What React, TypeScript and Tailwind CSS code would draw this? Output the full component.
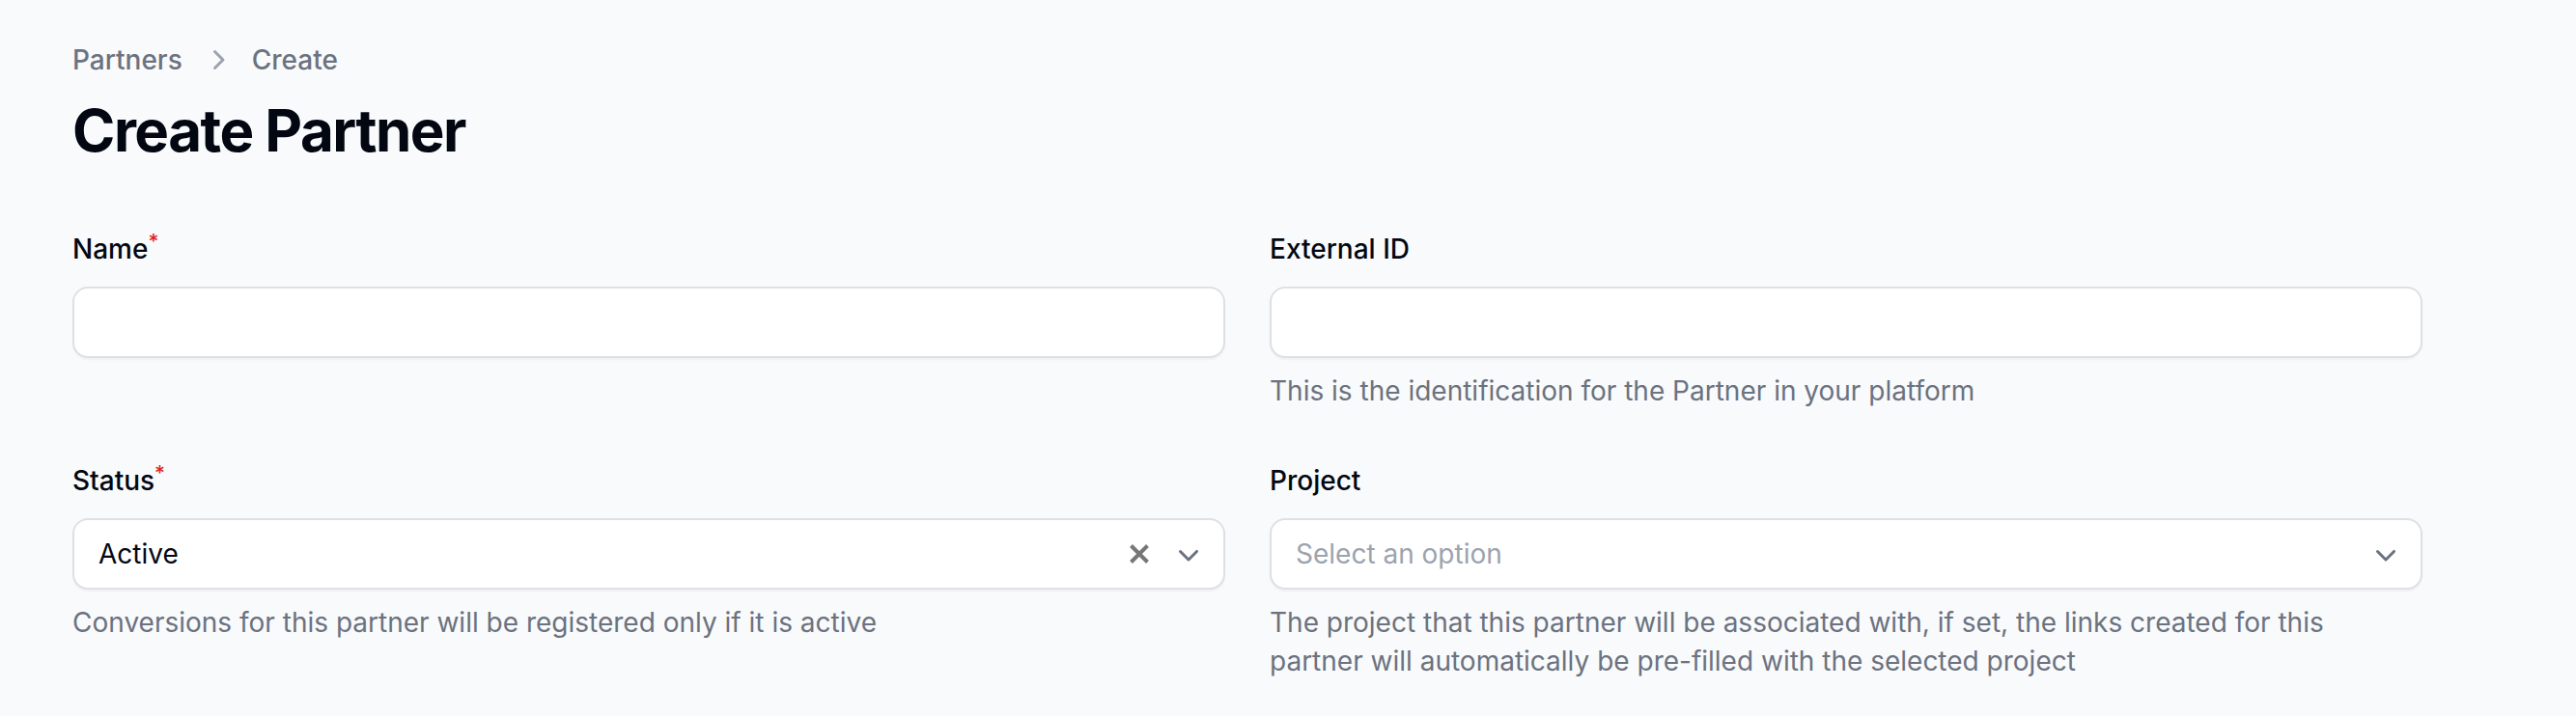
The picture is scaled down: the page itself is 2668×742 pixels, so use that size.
import React from "react"

function Chevron({ dir = "down", className = "" }: { dir?: "down" | "right"; className?: string }) {
  const d =
    dir === "down"
      ? "M5.22 8.22a.75.75 0 0 1 1.06 0L10 11.94l3.72-3.72a.75.75 0 1 1 1.06 1.06l-4.25 4.25a.75.75 0 0 1-1.06 0L5.22 9.28a.75.75 0 0 1 0-1.06Z"
      : "M8.22 5.22a.75.75 0 0 1 1.06 0l4.25 4.25a.75.75 0 0 1 0 1.06l-4.25 4.25a.75.75 0 0 1-1.06-1.06L11.94 10 8.22 6.28a.75.75 0 0 1 0-1.06Z"
  return (
    <svg viewBox="0 0 20 20" fill="currentColor" className={className}>
      <path fillRule="evenodd" clipRule="evenodd" d={d} />
    </svg>
  )
}

function Label({ text, required }: { text: string; required?: boolean }) {
  return (
    <label className="block text-[28px] leading-[48px] font-medium text-[#030712]">
      {text}
      {required && <sup className="text-[#dc2626] font-medium">*</sup>}
    </label>
  )
}

function Hint({ children }: { children: React.ReactNode }) {
  return <p className="mt-[14px] text-[28px] leading-[40px] text-[#6b7280]">{children}</p>
}

function TextInput() {
  return (
    <div className="mt-[15px] h-[74px] rounded-[16px] border-2 border-[#dfe0e3] bg-white shadow-[0_2px_2px_rgba(0,0,0,0.04)]" />
  )
}

function Select({ value, placeholder, clearable }: { value?: string; placeholder?: string; clearable?: boolean }) {
  return (
    <div className="mt-[15px] h-[74px] rounded-[16px] border-2 border-[#dfe0e3] bg-white shadow-[0_2px_2px_rgba(0,0,0,0.04)] flex items-center pl-[25px] pr-[16px]">
      <span className={`flex-1 text-[28px] leading-[48px] ${value ? "text-[#030712]" : "text-[#9ca3af]"}`}>
        {value ?? placeholder}
      </span>
      {clearable && (
        <svg viewBox="0 0 20 20" className="w-[20px] h-[20px] mr-[21px] text-[#777777]">
          <path d="M1.5 1.5L18.5 18.5M18.5 1.5L1.5 18.5" stroke="currentColor" strokeWidth="4" />
        </svg>
      )}
      <Chevron className="w-[40px] h-[40px] text-[#6b7280]" />
    </div>
  )
}

export default function App() {
  return (
    <div className="min-h-screen bg-[#f9fafb] font-['Inter',sans-serif]">
      <div className="pl-[75px] pt-[42px]">
        {/* Breadcrumbs */}
        <nav className="flex items-center gap-[16px] text-[28px] leading-[40px] font-medium text-[#6b7280]">
          <span>Partners</span>
          <Chevron dir="right" className="w-[40px] h-[40px] text-[#9ca3af]" />
          <span>Create</span>
        </nav>

        <h1 className="mt-[17px] text-[60px] leading-[72px] font-bold tracking-[-1.5px] text-[#030712]">
          Create Partner
        </h1>

        {/* Form */}
        <div className="mt-[63px] w-[2434px] grid grid-cols-2 gap-x-[46px] gap-y-[49px]">
          <div>
            <Label text="Name" required />
            <TextInput />
          </div>
          <div>
            <Label text="External ID" />
            <TextInput />
            <Hint>This is the identification for the Partner in your platform</Hint>
          </div>
          <div>
            <Label text="Status" required />
            <Select value="Active" clearable />
            <Hint>Conversions for this partner will be registered only if it is active</Hint>
          </div>
          <div>
            <Label text="Project" />
            <Select placeholder="Select an option" />
            <Hint>
              The project that this partner will be associated with, if set, the links created for this partner will
              automatically be pre-filled with the selected project
            </Hint>
          </div>
        </div>
      </div>
    </div>
  )
}
